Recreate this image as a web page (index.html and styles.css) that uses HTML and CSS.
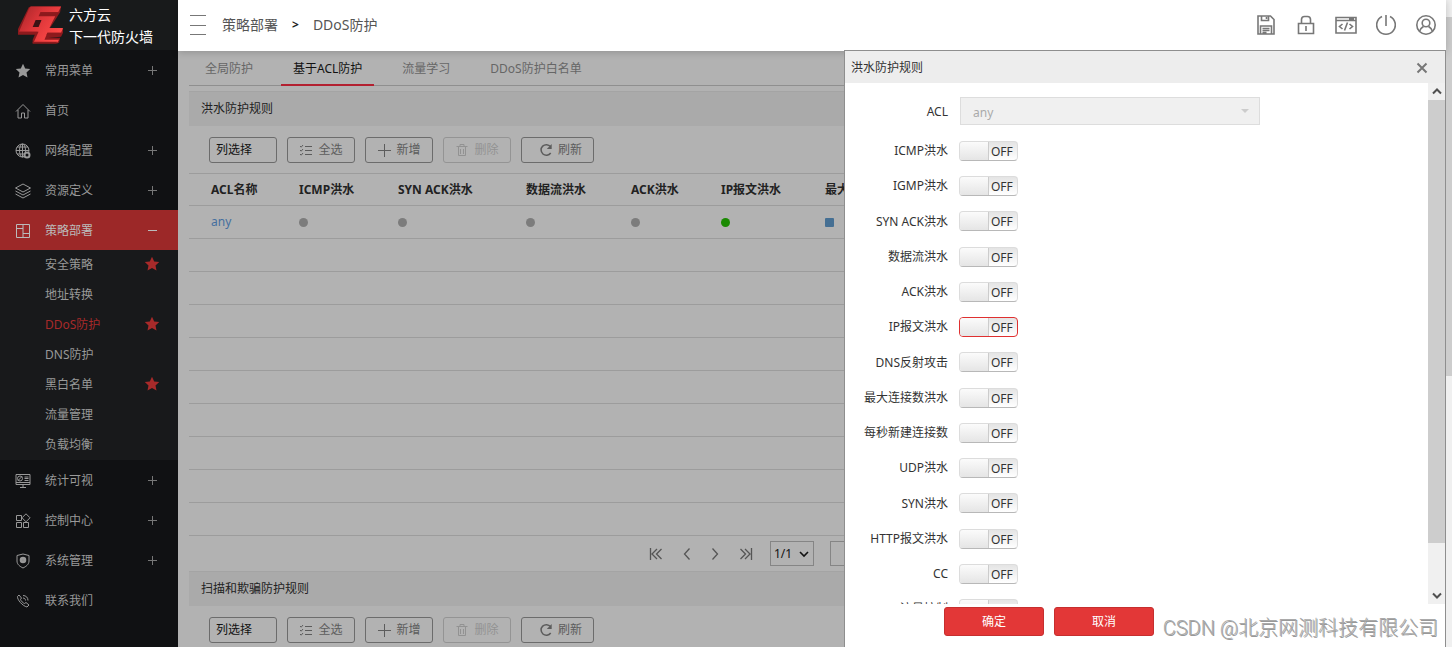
FILE: index.html
```html
<!DOCTYPE html>
<html lang="zh-CN">
<head>
<meta charset="utf-8">
<title>DDoS防护</title>
<link rel="stylesheet" href="styles.css">
</head>
<body>
<svg class="sprite" aria-hidden="true">
  <symbol id="i-star" viewBox="0 0 16 16"><path d="M8 .8l2.200 4.600 5 .6-3.700 3.500 1 5L8 12l-4.500 2.500 1-5L.8 6l5-.6z" fill="currentColor" stroke="none"/></symbol>
  <symbol id="i-list" viewBox="0 0 14 14"><path d="M1 3l1.200 1.200L4 2M1 7l1.200 1.200L4 6M1 11l1.200 1.200L4 10M6 3.500h7M6 7.500h7M6 11.500h7" fill="none" stroke="currentColor"/></symbol>
  <symbol id="i-plus" viewBox="0 0 14 14"><path d="M7.500 1v13M1 7.500h13" fill="none" stroke="currentColor"/></symbol>
  <symbol id="i-trash" viewBox="0 0 14 14"><path d="M1.500 3.500h11M5 3V1.500h4V3M3.500 4v8.500h7V4M5.500 6v5M8.500 6v5" fill="none" stroke="currentColor"/></symbol>
  <symbol id="i-refresh" viewBox="0 0 14 14"><path d="M11.700 10A5.300 5.300 0 1 1 11.500 3.600" fill="none" stroke="currentColor" stroke-width="1.500"/><path d="M12.700 1v5H7.800z" fill="currentColor" stroke="none"/></symbol>
</svg>

<aside class="sidebar">
  <div class="brand">
    <svg class="brand-logo" viewBox="0 0 48 40" aria-hidden="true">
      <defs><linearGradient id="face" x1="0" y1="0" x2="1" y2=".6"><stop offset="0" stop-color="#a32428"/><stop offset=".45" stop-color="#d93438"/><stop offset="1" stop-color="#ff4a48"/></linearGradient></defs>
      <path d="M13 2h31l-1 6-2 3-3 5-6 9h14v4l-2 4-13 1h12l-1 5-2 1H15v-4l3-7H0v-4L11 3z" fill="#8d1a1d"/>
      <path d="M13 2h31l-3 6H23l-2 4h17l-6 12h14l-2 5H30l-3 7h15l-2 3H16l5-11H1L11 5z" fill="url(#face)"/>
      <path d="M18 16h6l-3 7h-6z" fill="#3a1315"/>
      <path d="M0 28h20l-1 3H0zM15 38h25l-1 2H15zM23 8h18l-1 2H22zM30 29h14l-1 2H29z" fill="#8d1a1d"/>
    </svg>
    <div class="brand-name">六方云<br>下一代防火墙</div>
  </div>
  <nav class="menu">
    <a class="menu-item" href="#"><svg class="icon" viewBox="0 0 16 16"><use href="#i-star"/></svg><span>常用菜单</span><i class="toggle"></i></a>
    <a class="menu-item" href="#"><svg class="icon" viewBox="0 0 16 16"><path d="M1 8.500L8 1.500l7 7M3 7v8h3.500v-5h3v5H13V7"/></svg><span>首页</span></a>
    <a class="menu-item" href="#"><svg class="icon" viewBox="0 0 16 16"><circle cx="7.500" cy="7.500" r="6.500"/><ellipse cx="7.500" cy="7.500" rx="3" ry="6.500"/><path d="M1 7.500h13M7.500 1v13M2 4h11M2 11h8"/><circle cx="12" cy="12" r="2.500" fill="#101113" stroke-width="2"/></svg><span>网络配置</span><i class="toggle"></i></a>
    <a class="menu-item" href="#"><svg class="icon" viewBox="0 0 16 16"><path d="M8 1l7.500 4L8 9 .5 5zM.5 8L8 12l7.500-4M.5 11L8 15l7.500-4"/></svg><span>资源定义</span><i class="toggle"></i></a>
    <a class="menu-item active" href="#"><svg class="icon" viewBox="0 0 16 16"><path d="M1.500 1.500h13v13h-13zM8 1.500v13M1.500 5.500H8M8 10.500h6.500"/></svg><span>策略部署</span><i class="toggle open"></i></a>
    <div class="submenu">
      <a class="sub-item" href="#"><span>安全策略</span><svg class="fav"><use href="#i-star"/></svg></a>
      <a class="sub-item" href="#"><span>地址转换</span></a>
      <a class="sub-item current" href="#"><span>DDoS防护</span><svg class="fav"><use href="#i-star"/></svg></a>
      <a class="sub-item" href="#"><span>DNS防护</span></a>
      <a class="sub-item" href="#"><span>黑白名单</span><svg class="fav"><use href="#i-star"/></svg></a>
      <a class="sub-item" href="#"><span>流量管理</span></a>
      <a class="sub-item" href="#"><span>负载均衡</span></a>
    </div>
    <a class="menu-item" href="#"><svg class="icon" viewBox="0 0 16 16"><path d="M1 1.500h14v10H1zM1 9.500h14M8 11.500v3M5 14.500h6M9.500 4h4M9.500 5.500h4M9.500 7.500h4"/><circle cx="5" cy="5.500" r="2.500"/><path d="M3 7.500l4-4"/></svg><span>统计可视</span><i class="toggle"></i></a>
    <a class="menu-item" href="#"><svg class="icon" viewBox="0 0 16 16"><path d="M1.500 2.500h5v5h-5zM1.500 9.500h5v5h-5zM8.500 9.500h5v5h-5zM11 .8l4 4-4 4-4-4z"/></svg><span>控制中心</span><i class="toggle"></i></a>
    <a class="menu-item" href="#"><svg class="icon" viewBox="0 0 16 16"><path d="M8 1l6 1.500V8c0 3.500-3 5.500-6 7-3-1.500-6-3.500-6-7V2.500z"/><circle cx="8" cy="7" r="1.800" stroke-width="3"/></svg><span>系统管理</span><i class="toggle"></i></a>
    <a class="menu-item" href="#"><svg class="icon" viewBox="0 0 16 16"><path d="M4 2L2.500 3.500c-.5 3 5 9.500 9.500 10.500l2-2-3-2.500-1.500 1C8 10 6 8 5.500 6.500L6.500 5zM8 2.500c3 0 5 2 5 5M8 5c1.500 0 2.500 1 2.500 2.500"/></svg><span>联系我们</span></a>
  </nav>
</aside>

<div class="content">
  <header class="topbar">
    <button class="burger" aria-label="菜单"><i></i><i></i><i></i></button>
    <div class="crumbs"><span>策略部署</span><b>&gt;</b><span>DDoS防护</span></div>
    <div class="tools">
      <button aria-label="保存"><svg viewBox="0 0 20 20"><path d="M2 1h12.500L18 4.500V19H2zM5.500 1v4.500h7V1M10.500 2v2M4.500 19v-8h11v8M6.500 13.500h7M6.500 15.500h7M6.500 17.500h4"/></svg></button>
      <button aria-label="锁定"><svg viewBox="0 0 20 20"><path d="M2.500 8.500h15v10h-15zM5.500 8V4.500a3 3 0 0 1 3-3h3a3 3 0 0 1 3 3V8M10 11v5"/></svg></button>
      <button aria-label="控制台"><svg class="wide" viewBox="0 0 22 20"><path d="M1 2.500h20v15.500H1zM1 5.500h20M14 4h5" /><path d="M7.500 9L4.500 11.500l3 2.500M14.500 9l3 2.500-3 2.500M12.500 7.500l-3 8"/></svg></button>
      <button aria-label="退出"><svg viewBox="0 0 20 20"><path d="M6 1.500a9.300 9.300 0 1 0 8 0M10 0v11"/></svg></button>
      <button aria-label="用户"><svg viewBox="0 0 20 20"><circle cx="10" cy="10" r="9.200"/><circle cx="10" cy="8" r="3.800"/><path d="M3.500 16.500c.5-3 2.500-4 4-5M16.500 16.500c-.5-3-2.500-4-4-5"/></svg></button>
    </div>
  </header>

  <main class="page">
    <nav class="tabs">
      <a href="#">全局防护</a><a href="#" class="selected">基于ACL防护</a><a href="#">流量学习</a><a href="#">DDoS防护白名单</a>
    </nav>

    <section>
      <h2>洪水防护规则</h2>
      <div class="toolbar">
        <button class="columns">列选择</button>
        <button><svg><use href="#i-list"/></svg>全选</button>
        <button><svg><use href="#i-plus"/></svg>新增</button>
        <button disabled><svg><use href="#i-trash"/></svg>删除</button>
        <button class="refresh"><svg><use href="#i-refresh"/></svg>刷新</button>
      </div>
      <table class="rules">
        <colgroup><col class="c1"><col class="c2"><col class="c3"><col class="c4"><col class="c5"><col class="c6"><col></colgroup>
        <thead><tr><th>ACL名称</th><th>ICMP洪水</th><th>SYN ACK洪水</th><th>数据流洪水</th><th>ACK洪水</th><th>IP报文洪水</th><th>最大连接数洪水</th></tr></thead>
        <tbody>
          <tr><td><a href="#">any</a></td><td><i class="dot"></i></td><td><i class="dot"></i></td><td><i class="dot"></i></td><td><i class="dot"></i></td><td><i class="dot on"></i></td><td><i class="dot info"></i></td></tr>
          <tr><td colspan="7"></td></tr><tr><td colspan="7"></td></tr><tr><td colspan="7"></td></tr>
          <tr><td colspan="7"></td></tr><tr><td colspan="7"></td></tr><tr><td colspan="7"></td></tr>
          <tr><td colspan="7"></td></tr><tr><td colspan="7"></td></tr><tr><td colspan="7"></td></tr>
        </tbody>
      </table>
      <div class="pager">
        <button aria-label="首页"><svg viewBox="0 0 14 14"><path d="M1.500 1v12M8 2L3 7l5 5M12.500 2l-5 5 5 5"/></svg></button>
        <button aria-label="上一页"><svg viewBox="0 0 14 14"><path d="M9.500 1.500L4.500 7l5 5.500"/></svg></button>
        <button aria-label="下一页"><svg viewBox="0 0 14 14"><path d="M4.500 1.500l5 5.500-5 5.500"/></svg></button>
        <button aria-label="末页"><svg viewBox="0 0 14 14"><path d="M12.500 1v12M6 2l5 5-5 5M1.500 2l5 5-5 5"/></svg></button>
        <div class="page-select">
          <select aria-label="页码"><option>1/1</option></select>
          <svg viewBox="0 0 10 10"><path d="M1 3l4 4 4-4"/></svg>
        </div>
        <input type="text" aria-label="跳转页码" value="1">
      </div>
    </section>

    <section>
      <h2>扫描和欺骗防护规则</h2>
      <div class="toolbar">
        <button class="columns">列选择</button>
        <button><svg><use href="#i-list"/></svg>全选</button>
        <button><svg><use href="#i-plus"/></svg>新增</button>
        <button disabled><svg><use href="#i-trash"/></svg>删除</button>
        <button class="refresh"><svg><use href="#i-refresh"/></svg>刷新</button>
      </div>
    </section>
  </main>

  <form class="drawer">
    <div class="drawer-head"><span>洪水防护规则</span><button type="button" aria-label="关闭"><svg viewBox="0 0 12 12"><path d="M1.500 1.500l9 9M10.500 1.500l-9 9"/></svg></button></div>
    <div class="drawer-body">
      <div class="fields">
        <div class="acl-row"><label for="acl">ACL</label><div class="acl-select"><select id="acl" disabled><option>any</option></select></div></div>
        <div class="row"><label for="s1">ICMP洪水</label><span class="switch"><input type="checkbox" id="s1"><span>OFF</span></span></div>
        <div class="row"><label for="s2">IGMP洪水</label><span class="switch"><input type="checkbox" id="s2"><span>OFF</span></span></div>
        <div class="row"><label for="s3">SYN ACK洪水</label><span class="switch"><input type="checkbox" id="s3"><span>OFF</span></span></div>
        <div class="row"><label for="s4">数据流洪水</label><span class="switch"><input type="checkbox" id="s4"><span>OFF</span></span></div>
        <div class="row"><label for="s5">ACK洪水</label><span class="switch"><input type="checkbox" id="s5"><span>OFF</span></span></div>
        <div class="row"><label for="s6">IP报文洪水</label><span class="switch changed"><input type="checkbox" id="s6"><span>OFF</span></span></div>
        <div class="row"><label for="s7">DNS反射攻击</label><span class="switch"><input type="checkbox" id="s7"><span>OFF</span></span></div>
        <div class="row"><label for="s8">最大连接数洪水</label><span class="switch"><input type="checkbox" id="s8"><span>OFF</span></span></div>
        <div class="row"><label for="s9">每秒新建连接数</label><span class="switch"><input type="checkbox" id="s9"><span>OFF</span></span></div>
        <div class="row"><label for="s10">UDP洪水</label><span class="switch"><input type="checkbox" id="s10"><span>OFF</span></span></div>
        <div class="row"><label for="s11">SYN洪水</label><span class="switch"><input type="checkbox" id="s11"><span>OFF</span></span></div>
        <div class="row"><label for="s12">HTTP报文洪水</label><span class="switch"><input type="checkbox" id="s12"><span>OFF</span></span></div>
        <div class="row"><label for="s13">CC</label><span class="switch"><input type="checkbox" id="s13"><span>OFF</span></span></div>
        <div class="row"><label for="s14">流量控制</label><span class="switch"><input type="checkbox" id="s14"><span>OFF</span></span></div>
      </div>
      <div class="scrollbar">
        <svg viewBox="0 0 10 10"><path d="M1 7l4-4 4 4"/></svg>
        <div class="track"><i></i></div>
        <svg viewBox="0 0 10 10"><path d="M1 3l4 4 4-4"/></svg>
      </div>
    </div>
    <div class="drawer-foot"><button type="button">确定</button><button type="button">取消</button></div>
  </form>
</div>

<div class="page-scroll"><i></i></div>
<div class="watermark">CSDN @北京网测科技有限公司</div>
</body>
</html>
```
FILE: styles.css
```css
* { box-sizing: border-box; }

body {
  margin: 0;
  height: 100vh;
  display: flex;
  position: relative;
  overflow: hidden;
  background: #fff;
  color: #222;
  font: 12px/20px "Noto Sans", "Noto Sans CJK SC", sans-serif;
}

a { color: inherit; text-decoration: none; }
button, input, select { font: inherit; color: inherit; }
button { padding: 0; border: 0; background: none; }
svg { fill: none; stroke: currentColor; flex: none; }
.sprite { position: absolute; width: 0; height: 0; }

/* Sidebar */
.sidebar { width: 178px; flex: none; background: #101113; color: #999; }
.brand { height: 50px; display: flex; gap: 4px; padding: 4px 0 0 18px; background: #181a1b; }
.brand-logo { width: 47px; height: 40px; stroke: none; }
.brand-name { color: #fff; font-size: 14px; line-height: 22px; white-space: nowrap; }

.menu-item { display: flex; align-items: center; height: 40px; padding: 1px 20px 0 15px; }
.menu-item .icon { width: 16px; height: 16px; margin-right: 14px; }
.menu-item span { flex: 1; padding-top: 1px; }
.menu-item.active { background: #9c2828; color: #bbb; }
.toggle { position: relative; width: 11px; height: 11px; }
.toggle::before, .toggle::after { content: ""; position: absolute; background: #777; }
.toggle::before { left: 1px; right: 1px; top: 5px; height: 1px; }
.toggle::after { top: 1px; bottom: 1px; left: 5px; width: 1px; }
.toggle.open::before { background: #bbb; }
.toggle.open::after { display: none; }

.submenu { background: #18191b; }
.sub-item { display: flex; align-items: center; justify-content: space-between; height: 30px; padding: 0 18px 0 45px; }
.sub-item.current { color: #a82a2a; }
.fav { width: 16px; height: 16px; margin-bottom: 3px; color: #a82a2a; stroke: none; }

/* Top bar */
.content { flex: 1; min-width: 0; position: relative; display: flex; flex-direction: column; }
.topbar { height: 51px; flex: none; display: flex; align-items: center; padding: 0 10px 1px 12px; color: #555; z-index: 1; background: #fff; box-shadow: 0 1px 8px rgba(0, 0, 0, 0.2); }
.burger { width: 16px; height: 20px; display: flex; flex-direction: column; justify-content: space-between; }
.burger i { height: 1px; width: 16px; background: #777; }
.crumbs { display: flex; align-items: center; gap: 14px; margin-left: 16px; font-size: 14px; }
.crumbs b { font-size: 12px; color: #222; }
.tools { display: flex; gap: 20px; margin-left: auto; color: #777; }
.tools button { width: 20px; height: 20px; display: flex; justify-content: center; }
.tools svg { width: 20px; height: 20px; stroke-width: 1.6; }
.tools .wide { width: 22px; }

/* Page */
.page { flex: 1; min-height: 0; overflow: hidden; background: #b2b2b2; padding: 0 11px; }
.tabs { display: flex; gap: 16px; height: 35px; padding-left: 4px; border-bottom: 1px solid #8f8f8f; color: #666; }
.tabs a { height: 35px; padding: 8px 12px 0; }
.tabs .selected { color: #111; border-bottom: 2px solid #b32030; }

section h2 { margin: 0; padding: 7px 12px; font-size: 12px; line-height: 20px; font-weight: 400; background: #aaa; border-top: 1px solid #a4a4a4; }
.tabs + section { margin-top: 5px; }
.toolbar { display: flex; gap: 10px; padding: 11px 20px 10px; }
.toolbar button { width: 68px; height: 26px; display: flex; align-items: center; justify-content: center; gap: 5px; border: 1px solid #6c6c6c; border-radius: 3px; color: #5c5c5c; }
.toolbar svg { width: 14px; height: 14px; }
.toolbar .columns { justify-content: flex-start; padding-left: 6px; color: #111; }
.toolbar .refresh { width: 73px; padding-left: 6px; }
.toolbar button:disabled { color: #929292; border-color: #949494; }

.rules { width: 100%; table-layout: fixed; border-collapse: collapse; }
.c1 { width: 88px; } .c2 { width: 99px; } .c3 { width: 128px; } .c4 { width: 105px; } .c5 { width: 90px; } .c6 { width: 104px; }
.rules th { height: 32px; padding: 0 0 0 22px; text-align: left; font-weight: 700; white-space: nowrap; }
.rules td { height: 33px; padding: 0 0 0 22px; }
.rules tr { border-top: 1px solid #9c9c9c; }
.rules tbody { border-bottom: 1px solid #9c9c9c; }
.rules a { color: #456f9f; }
.dot { display: block; width: 9px; height: 9px; border-radius: 50%; background: #7c7c7c; }
.dot.on { background: #1a8a02; }
.dot.info { background: #456f93; border-radius: 1px; }

.pager { height: 35px; display: flex; align-items: center; padding-left: 460px; color: #555; }
.pager button { width: 14px; height: 14px; margin-right: 17px; display: flex; }
.pager button:nth-child(2) { margin-right: 14px; }
.pager svg { width: 14px; height: 14px; stroke-width: 1.3; }
.page-select { position: relative; }
.page-select select { display: block; width: 44px; height: 25px; padding: 0 0 0 3px; appearance: none; border: 1px solid #858585; border-radius: 0; background: none; color: #111; }
.page-select svg { position: absolute; right: 5px; top: 8px; width: 10px; height: 10px; stroke: #111; stroke-width: 1.6; }
.pager input { width: 50px; height: 25px; margin-left: 16px; padding: 0 14px; border: 1px solid #858585; background: none; }

/* Drawer */
.drawer { position: absolute; top: 50px; right: 0; bottom: 0; width: 602px; z-index: 2; display: flex; flex-direction: column; background: #fff; border: 1px solid #8e8e8e; border-bottom: 0; color: #333; }
.drawer-head { height: 32px; flex: none; display: flex; align-items: center; justify-content: space-between; padding: 2px 17px 0 6px; background: #ededed; }
.drawer-head button { display: flex; color: #777; }
.drawer-head svg { width: 12px; height: 12px; stroke-width: 2; }
.drawer-body { flex: 1; min-height: 0; display: flex; }
.fields { flex: 1; overflow: hidden; padding-top: 14px; }
.acl-row, .row { display: flex; align-items: center; gap: 11px; }
.acl-row { height: 28px; margin-bottom: 8px; gap: 12px; }
.row { height: 35px; }
.row:nth-child(4n) { height: 36px; }
.fields label { width: 103px; padding-top: 1px; text-align: right; white-space: nowrap; }
.acl-select { position: relative; width: 300px; }
.acl-select select { display: block; width: 100%; height: 28px; padding: 3px 0 0 12px; appearance: none; border: 1px solid #ddd; border-radius: 0; background: #f0f0f0; color: #aaa; opacity: 1; }
.acl-select::after { content: ""; position: absolute; right: 11px; top: 12px; border: 4px solid transparent; border-top-color: #ccc; border-bottom: 0; }
.switch { display: flex; width: 59px; height: 20px; border: 1px solid #dcdcdc; border-bottom-color: #b8b8b8; border-radius: 4px; overflow: hidden; background: linear-gradient(#e4e4e4, #fff); }
.switch input { appearance: none; width: 29px; margin: 0; border-right: 1px solid #ccc; background: linear-gradient(#fbfbfb, #e5e5e5); }
.switch span { padding-left: 2px; line-height: 19px; }
.switch.changed { border-color: #df3030; }

.scrollbar { width: 17px; display: flex; flex-direction: column; align-items: center; background: #f0f0f0; }
.scrollbar svg { width: 10px; height: 17px; stroke: #505050; stroke-width: 2; }
.track { flex: 1; width: 100%; }
.track i { display: block; height: 91%; background: #cdcdcd; }

.drawer-foot { height: 43px; flex: none; display: flex; gap: 10px; padding: 3px 0 0 99px; }
.drawer-foot button { width: 100px; height: 29px; padding-top: 1px; border: 1px solid #c62f2f; border-radius: 3px; background: #e33737; color: #fff; }

.page-scroll { width: 6px; flex: none; padding-top: 17px; background: #f0f0f0; }
.page-scroll i { display: block; height: 57%; background: #cdcdcd; }

.watermark { position: absolute; right: 14px; bottom: 4px; z-index: 3; font-size: 20px; line-height: 30px; font-weight: 300; color: #aaa; text-shadow: 1px 1px 0 #999; font-family: Roboto, "Noto Sans CJK SC", sans-serif; }
```
